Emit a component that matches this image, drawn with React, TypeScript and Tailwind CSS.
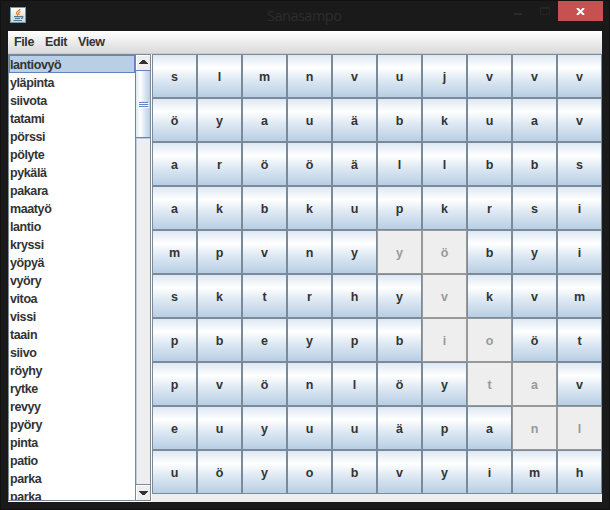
const words = ['lantiovyö','yläpinta','siivota','tatami','pörssi','pölyte','pykälä','pakara','maatyö','lantio','kryssi','yöpyä','vyöry','vitoa','vissi','taain','siivo','röyhy','rytke','revyy','pyöry','pinta','patio','parka','parka'];

const rows = ['slmnvujvvv','öyauäbkuav','arööällbbs','akbkupkrsi','mpvnyyöbyi','sktrhyvkvm','pbeypbioöt','pvönlöytav','euyuuäpanl','uöyobvyimh'];

const used = new Set(['4-5','4-6','5-6','6-6','6-7','7-7','7-8','8-8','8-9']);

function TitleBar() {
  return (
    <header className="relative h-[31px] shrink-0">
      <svg className="absolute left-[10px] top-[7px]" width="16" height="16" viewBox="0 0 16 16">
        <defs>
          <linearGradient id="cup" x1="0" y1="0" x2="0" y2="1">
            <stop offset="0" stopColor="#ffffff" />
            <stop offset="1" stopColor="#c9d5dd" />
          </linearGradient>
        </defs>
        <rect x=".5" y=".5" width="15" height="15" fill="url(#cup)" stroke="#7895a8" />
        <path d="M10 2C9.500 4 6 4.500 6.500 6.500L8 8.500M10.500 4.500C8 5.500 8.500 6.500 9.300 8" fill="none" stroke="#e8822a" strokeWidth="1.300" />
        <path d="M4 9.700h7M5 11.500h5M3.500 13.500h8.500M11 9.500c2.500-1 2.500 1.500 0 2" fill="none" stroke="#4d7590" strokeWidth="1.200" />
      </svg>
      <h1 className="absolute left-[267px] top-[6px] text-[14.5px] font-normal leading-5 tracking-[-0.5px] text-[#2e2e2e]" style={{ fontFamily: '"Open Sans", "Noto Sans", sans-serif' }}>Sanasampo</h1>
      <div className="absolute left-[514px] top-[13px] h-[2px] w-2 bg-[#2b2b2b]" />
      <div className="absolute left-[540px] top-[7px] h-2 w-[10px] border border-t-2 border-[#252525]" />
      <div className="absolute left-[558px] top-[1px] flex h-5 w-[45px] items-center justify-center bg-[#c75050]">
        <svg width="9" height="7" viewBox="0 0 9 7" className="mt-px">
          <path d="M1 0L8 7M8 0L1 7" stroke="#fff" strokeWidth="2" />
        </svg>
      </div>
    </header>
  );
}

function ScrollBar() {
  return (
    <div className="flex w-[15px] shrink-0 flex-col border-l border-[#7a8a99] bg-[#eee]">
      <div className="flex h-[15px] items-start justify-center border-l border-t border-white bg-[#eee] pt-1">
        <svg width="9" height="4" viewBox="0 0 9 4" shapeRendering="crispEdges"><path d="M3 0h3v1h1v1h1v1h1v1H0V3h1V2h1V1h1z" fill="#333" /></svg>
      </div>
      <div className="-ml-px flex h-[68px] flex-col items-center justify-center border border-r-0 border-[#6382bf] bg-[linear-gradient(90deg,#dde8f3,#fff_30%,#dde8f3_60%,#b8cfe5)]">
        <i className="h-px w-[9px] bg-[#6382bf] shadow-[1px_1px_#fff]" />
        <i className="mt-px h-px w-[9px] bg-[#6382bf] shadow-[1px_1px_#fff]" />
        <i className="mt-px h-px w-[9px] bg-[#6382bf] shadow-[1px_1px_#fff]" />
      </div>
      <div className="flex-1 border-l border-t border-[#b8cfe5]" />
      <div className="flex h-4 items-center justify-center border-t border-[#7a8a99] shadow-[inset_1px_1px_#fff]">
        <svg width="9" height="4" viewBox="0 0 9 4" shapeRendering="crispEdges"><path d="M0 0h9v1H8v1H7v1H6v1H3V3H2V2H1V1H0z" fill="#333" /></svg>
      </div>
    </div>
  );
}

export default function App() {
  return (
    <div className="flex h-[510px] w-[610px] flex-col overflow-hidden bg-[#1a1a1a] text-[12.5px] font-bold tracking-[-0.4px] text-[#333] shadow-[inset_0_0_0_1px_#111]" style={{ fontFamily: '"Liberation Sans", Arial, sans-serif' }}>
      <TitleBar />
      <main className="ml-2 flex h-[471px] w-[594px] flex-col bg-[#eee]">
        <nav className="flex h-[23px] shrink-0 gap-3 border-b border-[#ccc] bg-[linear-gradient(#fff,#dadada)] pl-[6px] leading-[22px]">
          <span className="w-[19px]">File</span>
          <span className="w-[21px]">Edit</span>
          <span>View</span>
        </nav>
        <div className="flex min-h-0 flex-1">
          <aside className="flex h-[447px] w-[143px] border border-[#7a8a99] bg-white shadow-[1px_1px_#fff]">
            <ul className="min-w-0 flex-1 overflow-hidden">
              {words.map((w, i) => (
                <li key={i} className={i === 0 ? 'h-[18px] bg-[#b8cfe5] pl-px leading-[20px] outline-1 -outline-offset-1 outline-[#6382bf]' : 'h-[18px] pl-px leading-[20px]'}>{w}</li>
              ))}
            </ul>
            <ScrollBar />
          </aside>
          <section className="ml-px grid h-[440px] w-[450px] grid-cols-10 grid-rows-10">
            {rows.flatMap((r, y) => [...r].map((c, x) => (
              <button key={`${y}-${x}`} disabled={used.has(`${y}-${x}`)} className="border border-[#7a8a99] bg-[linear-gradient(#dde8f3,#fff_30%,#dde8f3_60%,#b8cfe5)] pt-[2px] text-[12.5px] leading-[18px] tracking-normal disabled:border-[#999] disabled:bg-[#eee] disabled:bg-none disabled:text-[#999]">{c}</button>
            )))}
          </section>
        </div>
      </main>
    </div>
  );
}
